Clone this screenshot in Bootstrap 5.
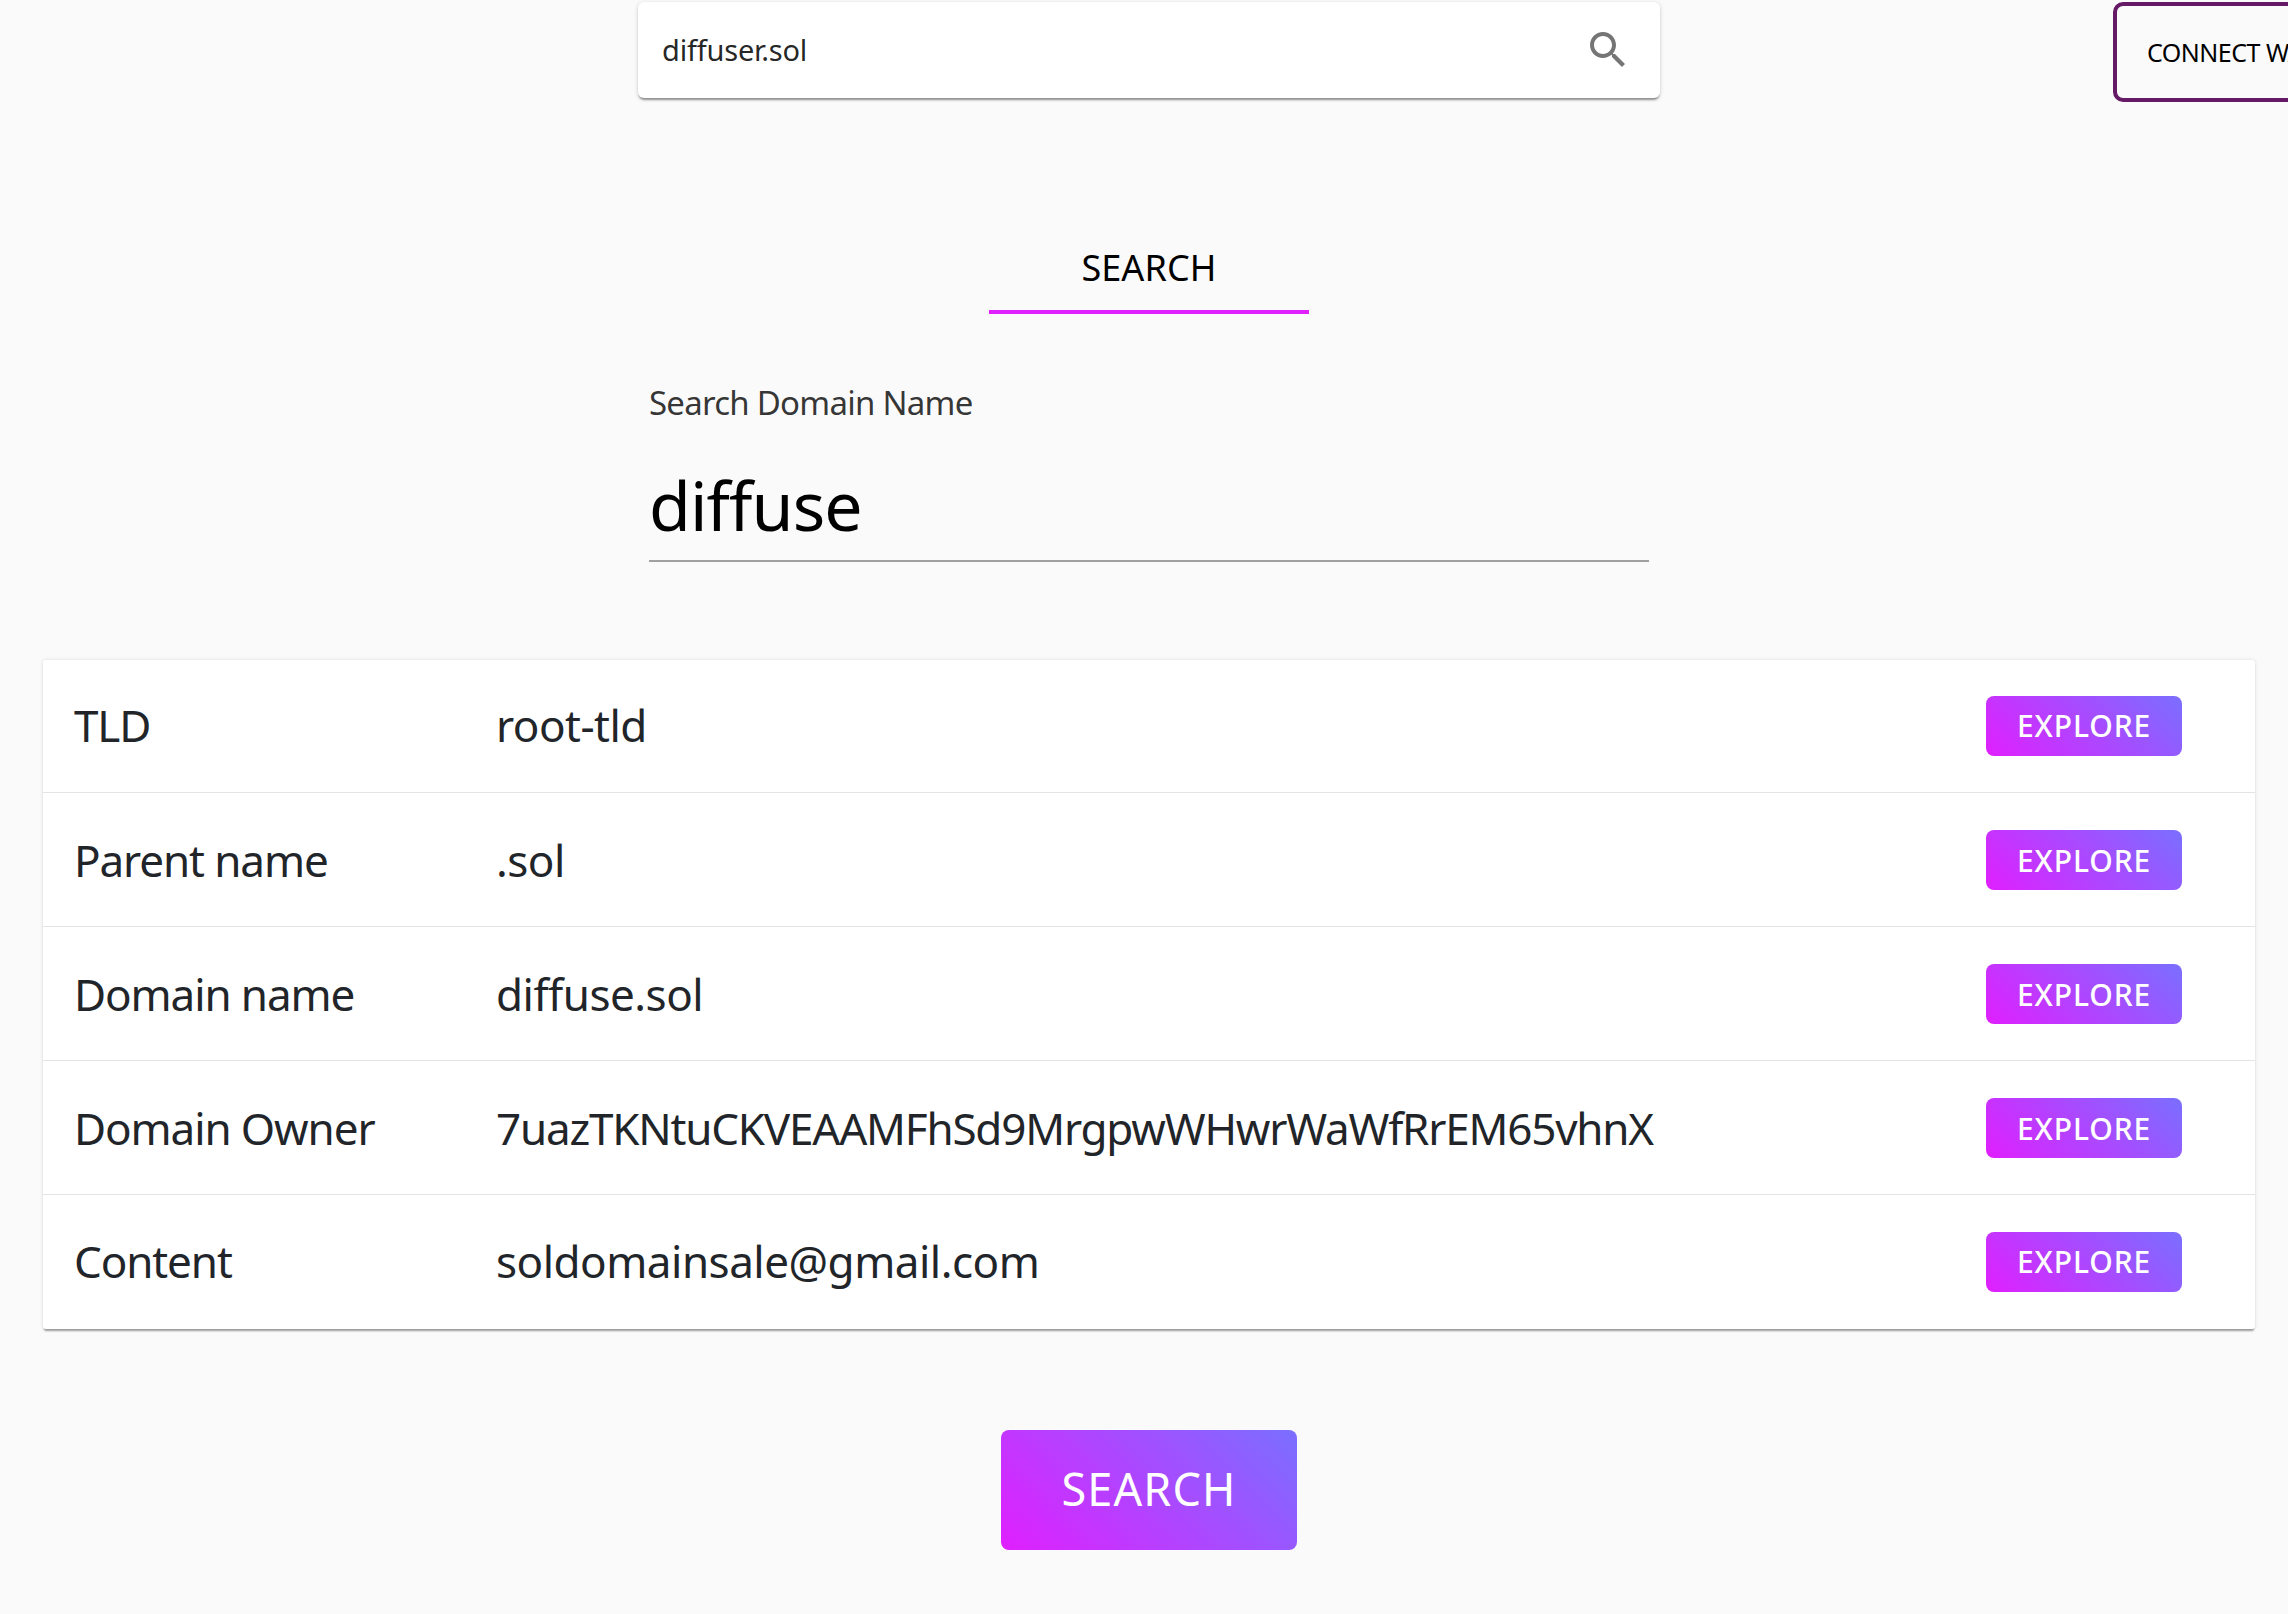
<!DOCTYPE html>
<html lang="en">
<head>
    <meta charset="UTF-8">
    <title>Search Domain Name</title>
    <link href="https://cdn.jsdelivr.net/npm/bootstrap@5.3.0/dist/css/bootstrap.min.css" rel="stylesheet">
    <style>
        html, body { background: #fafafa; }
        body {
            font-family: "Noto Sans", "Open Sans", sans-serif;
            color: rgba(0, 0, 0, .87);
            overflow-x: hidden;
            min-height: 1614px;
        }
        .page-wrap { width: 2212px; margin-left: 43px; }

        .top-bar { height: 104px; padding-top: 2px; }
        .search-paper {
            width: 1022px;
            height: 96px;
            margin-left: 595px;
            padding: 0 28px 0 24px;
            background: #fff;
            border-radius: 6px;
            box-shadow: 0 3px 2px -1px rgba(0,0,0,.35), 0 1px 4px rgba(0,0,0,.18);
            font-size: 29px;
            letter-spacing: -.2px;
            flex-shrink: 0;
        }
        .search-paper svg { width: 48px; height: 48px; fill: #757575; margin-top: -1px; }
        .search-paper span { margin-top: -1px; }
        .connect-btn {
            flex-shrink: 0;
            width: 320px;
            height: 100px;
            margin-left: 453px;
            padding: 2px 0 0 30px;
            border: 4px solid #661a66;
            border-radius: 10px;
            background: transparent;
            color: #000;
            font-size: 25px;
            letter-spacing: -.5px;
            white-space: nowrap;
            text-align: left;
        }

        .tab-row { margin-top: 131px; }
        .tab-item {
            width: 320px;
            height: 79px;
            border-bottom: 4px solid #e01fff;
            font-size: 36px;
            line-height: 66px;
            letter-spacing: .1px;
            color: #000;
            text-align: center;
        }

        .domain-form { width: 1000px; margin: 67px auto 0; }
        .domain-label { font-size: 33px; line-height: 44px; letter-spacing: -.75px; color: rgba(0,0,0,.8); }
        .domain-input {
            height: 137px;
            padding-top: 40px;
            border-bottom: 2px solid #a0a0a0;
            font-size: 68px;
            line-height: 80px;
            letter-spacing: -.9px;
            color: #000;
        }

        .result-card {
            margin-top: 98px;
            border: 0;
            border-radius: 3px;
            box-shadow: 0 3px 2px -1px rgba(0,0,0,.35), 0 0 4px rgba(0,0,0,.12);
        }
        .result-row {
            height: 134px;
            padding: 0 0 0 31px;
            border-color: #e4e4e4;
            border-width: 0 0 2px;
            font-size: 44px;
            letter-spacing: -1.1px;
        }
        .result-row:first-child { height: 133px; padding-bottom: 2px; }
        .result-row:last-child { border-bottom: 0; padding-bottom: 2px; }
        .result-name { width: 422px; flex-shrink: 0; }
        .result-value { letter-spacing: -.5px; }
        .result-value.is-address { letter-spacing: -1.2px; }
        .grad-btn {
            background: linear-gradient(45deg, #e01fff, #7a6fff);
            border: 0;
            color: #fff;
        }
        .explore-btn {
            width: 196px;
            height: 60px;
            margin: 1px 73px 0 0;
            padding: 0;
            border-radius: 8px;
            font-size: 30px;
            font-weight: 500;
            letter-spacing: .9px;
        }
        .big-btn-row { margin-top: 101px; }
        .big-btn {
            width: 296px;
            height: 120px;
            padding: 0 0 2px;
            border-radius: 8px;
            font-size: 45px;
            letter-spacing: 1.1px;
        }
        .big-btn:hover, .explore-btn:hover { color: #fff; background: linear-gradient(45deg, #e01fff, #7a6fff); }
    </style>
</head>
<body>
    <div class="page-wrap">
        <div class="top-bar d-flex align-items-start">
            <div class="search-paper d-flex align-items-center justify-content-between">
                <span>diffuser.sol</span>
                <svg viewBox="0 0 24 24"><path d="M15.5 14h-.79l-.28-.27C15.41 12.59 16 11.11 16 9.5 16 5.91 13.09 3 9.5 3S3 5.91 3 9.5 5.91 16 9.5 16c1.61 0 3.09-.59 4.23-1.57l.27.28v.79l5 4.99L20.49 19l-4.99-5zm-6 0C7.01 14 5 11.99 5 9.5S7.01 5 9.5 5 14 7.01 14 9.5 11.99 14 9.5 14z"/></svg>
            </div>
            <button class="btn connect-btn" type="button">CONNECT WALLET</button>
        </div>

        <div class="tab-row d-flex justify-content-center">
            <div class="tab-item">SEARCH</div>
        </div>

        <div class="domain-form">
            <div class="domain-label">Search Domain Name</div>
            <div class="domain-input">diffuse</div>
        </div>

        <div class="card result-card">
            <div class="list-group list-group-flush">
                <div class="list-group-item result-row d-flex align-items-center">
                    <div class="result-name">TLD</div>
                    <div class="result-value flex-grow-1">root-tld</div>
                    <button class="btn grad-btn explore-btn" type="button">EXPLORE</button>
                </div>
                <div class="list-group-item result-row d-flex align-items-center">
                    <div class="result-name">Parent name</div>
                    <div class="result-value flex-grow-1">.sol</div>
                    <button class="btn grad-btn explore-btn" type="button">EXPLORE</button>
                </div>
                <div class="list-group-item result-row d-flex align-items-center">
                    <div class="result-name">Domain name</div>
                    <div class="result-value flex-grow-1">diffuse.sol</div>
                    <button class="btn grad-btn explore-btn" type="button">EXPLORE</button>
                </div>
                <div class="list-group-item result-row d-flex align-items-center">
                    <div class="result-name">Domain Owner</div>
                    <div class="result-value is-address flex-grow-1">7uazTKNtuCKVEAAMFhSd9MrgpwWHwrWaWfRrEM65vhnX</div>
                    <button class="btn grad-btn explore-btn" type="button">EXPLORE</button>
                </div>
                <div class="list-group-item result-row d-flex align-items-center">
                    <div class="result-name">Content</div>
                    <div class="result-value flex-grow-1">soldomainsale@gmail.com</div>
                    <button class="btn grad-btn explore-btn" type="button">EXPLORE</button>
                </div>
            </div>
        </div>

        <div class="big-btn-row d-flex justify-content-center">
            <button class="btn grad-btn big-btn" type="button">SEARCH</button>
        </div>
    </div>
    <script src="https://cdn.jsdelivr.net/npm/bootstrap@5.3.0/dist/js/bootstrap.bundle.min.js"></script>
</body>
</html>
